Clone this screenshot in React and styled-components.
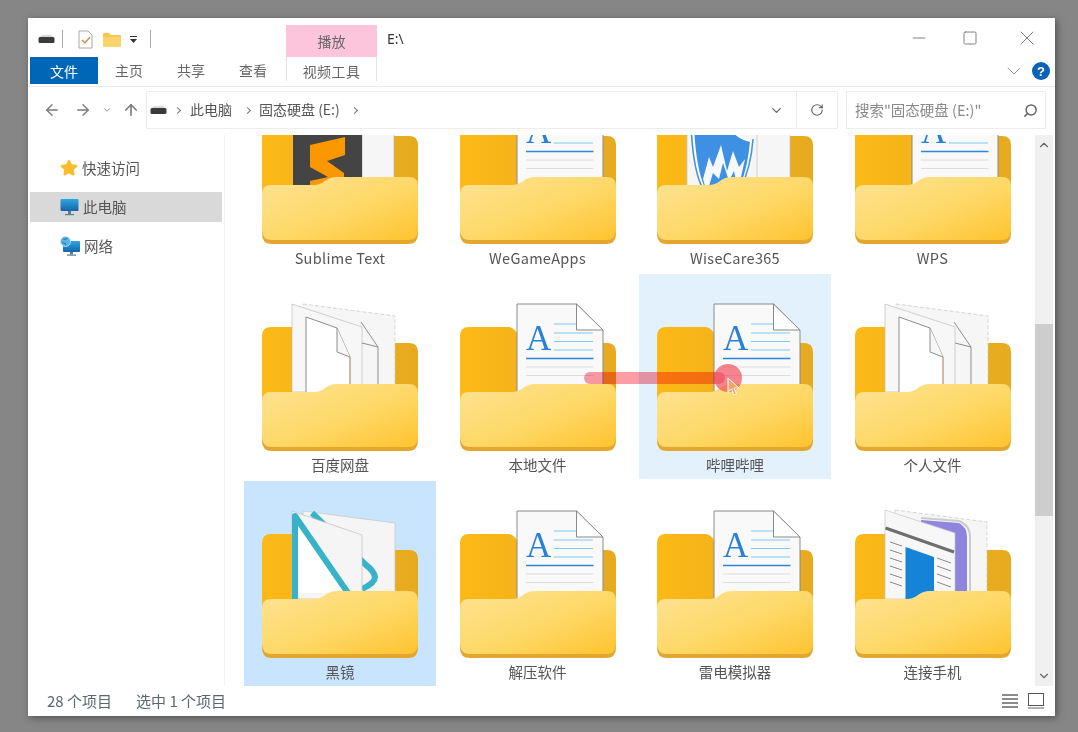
import React from "react";
import styled, { createGlobalStyle } from "styled-components";
import { ArrowLeft, ArrowRight, ArrowUp, ChevronDown, ChevronUp, RotateCw, Search, Minus, Square, X, Star } from "lucide-react";

const Global = createGlobalStyle`
  html, body { margin: 0; padding: 0; background: #868686; }
  * { box-sizing: border-box; }
  body { font-family: "Noto Sans CJK SC", "Noto Sans", sans-serif; color: #555; }
`;

const Page = styled.div`
  width: 1078px; height: 732px; padding: 18px 23px 16px 28px; background: #868686; overflow: hidden;
`;
const Window = styled.div`
  position: relative; width: 1027px; height: 698px; background: #fff;
  display: flex; flex-direction: column; overflow: hidden;
  box-shadow: 2px 2px 7px rgba(40,40,40,.55);
`;
const TitleBar = styled.div`display: flex; height: 39px; flex: none;`;
const QuickTools = styled.div`
  width: 258px; display: flex; align-items: center; padding: 3px 0 0 10px;
`;
const ToolSep = styled.span`
  width: 1px; height: 18px; background: #a8a8a8; margin: ${p => p.$m};
`;
const ToolGap = styled.span`width: ${p => p.$w}px; flex: none;`;
const ContextTab = styled.div`
  width: 91px; margin-top: 7px; background: #fcc5dc; color: #666; font-size: 14px;
  display: flex; align-items: center; justify-content: center; line-height: 1;
`;
const PathTitle = styled.div`
  flex: 1; padding: 12px 0 0 10px; font-size: 14px; line-height: 18px; color: #333; font-family: "Noto Sans", sans-serif;
`;
const WinControls = styled.div`display: flex; color: #808080; padding: 8px 16px 0 0; height: 39px;`;
const WinButton = styled.span`
  width: 24px; height: 24px; display: flex; align-items: center; justify-content: center; margin-right: ${p => p.$mr || 0}px;
`;
const TabRow = styled.div`
  display: flex; align-items: flex-start; height: 30px; flex: none; border-bottom: 1px solid #e9e9e9; padding-left: 2px;
`;
const FileTab = styled.div`
  width: 68px; height: 27px; background: #0067b8; color: #fff; font-size: 14px;
  display: flex; align-items: center; justify-content: center;
`;
const Tab = styled.div`
  width: 62px; height: 27px; font-size: 14px; color: #666; display: flex; align-items: center; justify-content: center; padding-bottom: 1px;
`;
const TabsGap = styled.div`width: 2px;`;
const VideoTab = styled.div`
  width: 91px; height: 24px; font-size: 14px; color: #666; letter-spacing: .4px;
  border-left: 1px solid #e4e4e4; border-right: 1px solid #e4e4e4;
  display: flex; align-items: center; justify-content: center; padding-top: 3px;
`;
const TabEnd = styled.div`
  margin-left: auto; height: 28px; display: flex; align-items: center; gap: 6px; padding: 0 5px 0 0; color: #999;
`;
const Help = styled.div`
  width: 18px; height: 18px; border-radius: 50%; background: #0c62b4; color: #fff; font-size: 13px; font-weight: 700;
  display: flex; align-items: center; justify-content: center; font-family: "Liberation Sans", sans-serif;
`;
const AddressRow = styled.div`
  display: flex; align-items: flex-start; height: 48px; flex: none; padding-top: 4px;
`;
const NavButtons = styled.div`
  width: 118px; height: 38px; display: flex; align-items: center; color: #7a7a7a; padding-left: 15px;
`;
const NavSpace = styled.span`display: flex; width: ${p => p.$w}px; justify-content: flex-start;`;
const AddressBox = styled.div`
  width: 692px; height: 38px; border: 1px solid #ececec; display: flex; align-items: center; font-size: 14px; color: #555;
`;
const Crumbs = styled.div`flex: 1; display: flex; align-items: center; padding-left: 3px;`;
const Crumb = styled.span`margin-right: ${p => p.$mr || 0}px; padding-bottom: 2px; white-space: nowrap;`;
const CrumbArrow = styled.span`
  width: 5px; height: 5px; border-top: 1.5px solid #777; border-right: 1.5px solid #777; transform: rotate(45deg);
  margin: ${p => p.$m};
`;
const DropBtn = styled.div`width: 40px; display: flex; justify-content: center; color: #666;`;
const RefreshBtn = styled.div`
  width: 41px; height: 36px; border-left: 1px solid #ececec; display: flex; align-items: center; justify-content: center; color: #666;
`;
const SearchBox = styled.div`
  width: 200px; height: 38px; margin-left: 8px; border: 1px solid #ececec; display: flex; align-items: center;
  justify-content: space-between; padding: 0 7px 0 8px; font-size: 14.5px; color: #8a8a8a; white-space: nowrap;
`;
const SearchText = styled.span`padding-bottom: 2px;`;
const FlippedSearch = styled(Search)`transform: scaleX(-1); color: #666;`;
const Main = styled.div`flex: 1; display: flex; min-height: 0;`;
const Sidebar = styled.div`
  width: 196px; flex: none; padding: 18px 0 0 2px; display: flex; flex-direction: column; gap: 9px;
`;
const NavRow = styled.div`
  width: 192px; height: 30px; display: flex; align-items: center; gap: 4px; padding-left: 30px; font-size: 14.5px; color: #555;
  background: ${p => (p.$active ? "#d9d9d9" : "transparent")};
`;
const NavText = styled.span`padding-bottom: 2px;`;
const Pane = styled.div`
  flex: 1; border-left: 1px solid #f3f3f3; padding-left: 19px; overflow: hidden; display: flex; flex-direction: column; justify-content: flex-end;
`;
const Grid = styled.div`
  display: grid; grid-template-columns: repeat(4, 192px); column-gap: 5.5px; row-gap: 2px; flex: none;
`;
const Cell = styled.div`
  width: 192px; height: 205px; display: flex; flex-direction: column; align-items: center;
  background: ${p => (p.$state === "selected" ? "#c9e5fe" : p.$state === "hover" ? "#e3f1fd" : "transparent")};
`;
const Label = styled.div`
  font-size: 14.5px; line-height: 22px; color: #555; white-space: nowrap; letter-spacing: ${p => (p.$latin ? ".3px" : "0")};
`;
const FolderSvg = styled.svg`display: block; flex: none;`;
const Scrollbar = styled.div`
  width: 18px; flex: none; margin-right: 2px; background: #f0f0f0; display: flex; flex-direction: column; align-items: center; color: #666;
`;
const ScrollBtn = styled.div`height: 20px; flex: none; display: flex; align-items: center; justify-content: center;`;
const Track = styled.div`flex: 1; width: 100%; padding-top: 169px;`;
const Thumb = styled.div`width: 100%; height: 192px; background: #cdcdcd;`;
const Status = styled.div`
  height: 30px; flex: none; display: flex; align-items: center; padding: 0 11px 0 19px; font-size: 15px; color: #5a6770;
`;
const StatusItem = styled.span`margin-right: ${p => p.$mr}px; padding-bottom: 2px; white-space: nowrap;`;
const ViewIcons = styled.div`margin-left: auto; display: flex; gap: 10px; align-items: center;`;
const Trail = styled.div`
  position: absolute; left: 556px; top: 354px; width: 141px; height: 12px; border-radius: 6px; background: #fb9ca6;
  mix-blend-mode: multiply; pointer-events: none;
`;
const Dot = styled.div`
  position: absolute; left: 686px; top: 346px; width: 28px; height: 28px; border-radius: 50%;
  background: rgba(240, 62, 78, .62); pointer-events: none;
`;
const Cursor = styled.svg`position: absolute; left: 699px; top: 359px;`;

const Defs = () => (
  <svg width="0" height="0" style={{ position: "absolute" }}>
    <defs>
      <linearGradient id="back" x1="0" x2="1" y1="0" y2="0">
        <stop offset="0" stopColor="#fdb916" /><stop offset="1" stopColor="#e6aa20" />
      </linearGradient>
      <linearGradient id="front" x1="0" x2="1" y1="0" y2="1">
        <stop offset="0" stopColor="#fde394" /><stop offset=".55" stopColor="#fed866" /><stop offset="1" stopColor="#fec32f" />
      </linearGradient>
      <linearGradient id="pc" x1="0" x2="0" y1="0" y2="1">
        <stop offset="0" stopColor="#2ea6e0" /><stop offset="1" stopColor="#1565a8" />
      </linearGradient>
    </defs>
  </svg>
);

const Sheets = () => (
  <g>
    <path d="M59 30 L151 42 V118 H59 Z" fill="#f6f6f6" stroke="#c4c4c4" strokeWidth=".7" strokeDasharray="4 2" />
    <path d="M48 30 L118 53 V118 H48 Z" fill="#f7f7f7" stroke="#bdbdbd" strokeWidth=".7" />
  </g>
);

const DocIcon = () => (
  <g>
    <path d="M75 30 H134.5 L161 56 V118 H75 Z" fill="#f9f9f9" stroke="#8a8a8a" strokeWidth="1" />
    <path d="M134.5 30 V56 H161 Z" fill="#fff" stroke="#8a8a8a" strokeWidth="1" />
    <text x="84" y="76" fontFamily="Liberation Serif, serif" fontSize="35" fill="#2a80d4">A</text>
    <g stroke="#7ccbee" strokeWidth="1.2">
      <path d="M112 50 H134 M112 59 H151 M112 67.5 H151 M112 76 H151" />
    </g>
    <path d="M84 84.5 H151.5" stroke="#2f86d6" strokeWidth="1.3" />
    <path d="M84 93 H151.5 M84 101.5 H151.5" stroke="#dddddd" strokeWidth="1.2" />
  </g>
);

const PagesIcon = () => (
  <g>
    <Sheets />
    <path d="M117 48 L134 73 V112 M118 69 L134 73" fill="none" stroke="#8d8d8d" strokeWidth="1" />
    <path d="M62 118 V43 L93 54 L106 83 V118" fill="#fff" stroke="#8d8d8d" strokeWidth="1" />
    <path d="M93 54 V78 L106 83" fill="#f7f7f7" stroke="#8d8d8d" strokeWidth="1" />
    <path d="M106 83 V112" stroke="#e0b080" strokeWidth="1" />
  </g>
);

const SublimeIcon = () => (
  <g>
    <rect x="118" y="30" width="32" height="90" fill="#f6f6f6" stroke="#b4b4b4" strokeWidth=".7" />
    <rect x="49" y="30" width="69" height="90" fill="#444444" />
    <path d="M66 78 L101 70 V88 L83 94 L100 106 V116 L66 120 V114 L84 110 L66 100 Z" fill="#fb9800" />
  </g>
);

const WiseIcon = () => (
  <g>
    <rect x="48" y="30" width="103" height="90" fill="#f6f6f6" stroke="#c6c6c6" strokeWidth=".7" />
    <path d="M118 30 V120" stroke="#c8c8c8" strokeWidth=".8" />
    <path d="M54 60 Q56 100 64 119 H102 Q110 100 112 74 Q100 72 92 62 Q76 62 54 60 Z" fill="#3e90e2" stroke="#fff" strokeWidth="2" />
    <path d="M52 58 Q54 102 63 120 M114 72 Q112 100 102 120" fill="none" stroke="#3e90e2" strokeWidth="1.5" />
    <path d="M64 112 L70 90 L74 100 L82 78 L88 104 L94 84 L100 100 L106 92 L100 119 H66 Z" fill="#fff" opacity=".95" />
    <path d="M70 119 L74 106 L80 112 L84 96 L90 114 L95 104 L98 119 Z" fill="#3e90e2" />
  </g>
);

const MirrorIcon = () => (
  <g>
    <path d="M59 30 L151 42 V118 H59 Z" fill="#f5f5f5" stroke="#c4c4c4" strokeWidth=".7" />
    <path d="M68 32 L122 84 Q130 90 131 96 Q131 102 118 108" fill="none" stroke="#37b2c8" strokeWidth="6" />
    <path d="M48 30 L118 54 V118 H48 Z" fill="#f5f5f5" stroke="#c0c0c0" strokeWidth=".7" />
    <path d="M51 120 V35 L104 112 H51 Z" fill="#fff" />
    <path d="M51 120 V35 L104 112" fill="none" stroke="#37b2c8" strokeWidth="6" strokeLinejoin="round" />
  </g>
);

const PhoneIcon = () => (
  <g>
    <path d="M58 29 L150 41 V118 H58 Z" fill="#f6f6f6" stroke="#c4c4c4" strokeWidth=".7" strokeDasharray="4 2" />
    <path d="M84 39 L122 42 Q130 46 130 56 V110 H84 Z" fill="#8f85df" />
    <path d="M84 37 L122 40 Q133 44 133 56 V110" fill="none" stroke="#999" strokeWidth="2" opacity=".45" />
    <path d="M48 29 L118 52 V118 H48 Z" fill="#f7f7f7" stroke="#c4c4c4" strokeWidth=".7" />
    <path d="M48.5 47 L117 71" stroke="#6e6e6e" strokeWidth="3" />
    <path d="M68.5 66 L97 76 V118 H68.5 Z" fill="#1584d8" />
    <path d="M53 61 L65 65 M53 69 L65 73 M53 77 L65 81 M53 85 L65 89 M53 93 L65 97 M53 101 L65 105 M100 77 L114 82 M100 85 L114 90 M100 93 L114 98 M100 101 L114 106"
      stroke="#8a8a8a" strokeWidth="1" />
  </g>
);

const contents = { doc: DocIcon, pages: PagesIcon, sublime: SublimeIcon, wise: WiseIcon, mirror: MirrorIcon, phone: PhoneIcon };

const Folder = ({ kind }) => {
  const Inner = contents[kind];
  return (
    <FolderSvg width="192" height="180" viewBox="0 0 192 180">
      <path d="M18 62 Q18 53 27 53 H66 Q74 53 80 69 H165 Q174 69 174 78 V130 H18 Z" fill="url(#back)" />
      <Inner />
      <path d="M18 130 H174 V167 Q174 177 164 177 H28 Q18 177 18 167 Z" fill="#e3a62e" />
      <path d="M18 127 Q18 118 27 118 H70 Q76 118 81 114 Q86 110 93 110 H165 Q174 110 174 119 V163 Q174 173 164 173 H28 Q18 173 18 163 Z" fill="url(#front)" />
    </FolderSvg>
  );
};

const items = [
  ["Sublime Text", "sublime"], ["WeGameApps", "doc"], ["WiseCare365", "wise"], ["WPS", "doc"],
  ["百度网盘", "pages"], ["本地文件", "doc"], ["哔哩哔哩", "doc", "hover"], ["个人文件", "pages"],
  ["黑镜", "mirror", "selected"], ["解压软件", "doc"], ["雷电模拟器", "doc"], ["连接手机", "phone"],
];

const Drive = ({ w = 17 }) => (
  <svg width={w} height="10" viewBox="0 0 17 10">
    <path d="M2 3 Q3 1 5 1 H12 Q14 1 15 3 Z" fill="#d8d8d8" />
    <rect x="0.5" y="3" width="16" height="6" rx="1.5" fill="#3a3a3a" />
  </svg>
);
const CheckDoc = () => (
  <svg width="15" height="19" viewBox="0 0 15 19">
    <path d="M1 1 H10 L14 5 V18 H1 Z" fill="#fff" stroke="#a8a8a8" />
    <path d="M4 10 L7 13 L12 7" fill="none" stroke="#d98a3a" strokeWidth="1.4" />
  </svg>
);
const YellowFolder = () => (
  <svg width="18" height="15" viewBox="0 0 18 15">
    <path d="M0 2 Q0 1 1 1 H6 L8 3 H17 Q18 3 18 4 V14 Q18 15 17 15 H1 Q0 15 0 14 Z" fill="#fcc64a" />
    <path d="M0 5 H18 V14 Q18 15 17 15 H1 Q0 15 0 14 Z" fill="#fdd36f" />
  </svg>
);
const Caret = () => (
  <svg width="9" height="7" viewBox="0 0 9 7">
    <rect x="1" y="0" width="7" height="1" fill="#333" />
    <path d="M1 3 H8 L4.5 7 Z" fill="#333" />
  </svg>
);
const Pc = () => (
  <svg width="19" height="18" viewBox="0 0 19 18">
    <rect x="0.5" y="1" width="18" height="12" rx="1" fill="url(#pc)" />
    <rect x="8" y="13" width="3" height="3" fill="#5b7d94" />
    <rect x="5" y="16" width="9" height="1.2" fill="#5b7d94" />
  </svg>
);
const Net = () => (
  <svg width="20" height="20" viewBox="0 0 20 20">
    <rect x="3" y="5" width="17" height="11" rx="1" fill="url(#pc)" />
    <rect x="10" y="16" width="3" height="2.5" fill="#5b7d94" />
    <rect x="7" y="18.5" width="9" height="1.2" fill="#5b7d94" />
    <circle cx="5.5" cy="5.5" r="5" fill="#57b2e4" stroke="#cfeafa" strokeWidth=".8" />
    <path d="M3 3 Q6 4 7 2 M2 7 Q5 6 6 9" stroke="#2b7db8" strokeWidth="1.2" fill="none" />
  </svg>
);
const DetailsIcon = () => (
  <svg width="16" height="15" viewBox="0 0 16 15">
    <path d="M0 1 H16 M0 5 H16 M0 9 H16 M0 13 H16" stroke="#666" strokeWidth="1.3" />
  </svg>
);
const LargeIcon = () => (
  <svg width="16" height="16" viewBox="0 0 16 16">
    <rect x=".5" y=".5" width="15" height="12" fill="none" stroke="#555" />
    <path d="M0 15 H16" stroke="#666" />
  </svg>
);

export default function App() {
  return (
    <Page>
      <Global />
      <Defs />
      <Window>
        <TitleBar>
          <QuickTools>
            <Drive />
            <ToolSep $m="0 15px 0 7px" />
            <CheckDoc />
            <ToolGap $w={10} />
            <YellowFolder />
            <ToolGap $w={8} />
            <Caret />
            <ToolSep $m="0 0 0 12px" />
          </QuickTools>
          <ContextTab>播放</ContextTab>
          <PathTitle>E:\</PathTitle>
          <WinControls>
            <WinButton $mr={27.5}><Minus size={20} strokeWidth={1} absoluteStrokeWidth /></WinButton>
            <WinButton $mr={33}><Square size={16} strokeWidth={1} absoluteStrokeWidth /></WinButton>
            <WinButton><X size={24} strokeWidth={1} absoluteStrokeWidth /></WinButton>
          </WinControls>
        </TitleBar>
        <TabRow>
          <FileTab>文件</FileTab>
          <Tab>主页</Tab>
          <Tab>共享</Tab>
          <Tab>查看</Tab>
          <TabsGap />
          <VideoTab>视频工具</VideoTab>
          <TabEnd>
            <ChevronDown size={24} strokeWidth={1} absoluteStrokeWidth />
            <Help>?</Help>
          </TabEnd>
        </TabRow>
        <AddressRow>
          <NavButtons>
            <NavSpace $w={31}><ArrowLeft size={18} strokeWidth={1.8} /></NavSpace>
            <NavSpace $w={28}><ArrowRight size={18} strokeWidth={1.8} /></NavSpace>
            <NavSpace $w={20}><ChevronDown size={10} strokeWidth={2} /></NavSpace>
            <NavSpace $w={20}><ArrowUp size={18} strokeWidth={2.2} /></NavSpace>
          </NavButtons>
          <AddressBox>
            <Crumbs>
              <Drive />
              <CrumbArrow $m="0 10px 0 8px" />
              <Crumb $mr={5}>此电脑</Crumb>
              <CrumbArrow $m="0 9px 0 8px" />
              <Crumb>固态硬盘 (E:)</Crumb>
              <CrumbArrow $m="0 0 0 12px" />
            </Crumbs>
            <DropBtn><ChevronDown size={15} strokeWidth={2} /></DropBtn>
            <RefreshBtn><RotateCw size={14} strokeWidth={2} /></RefreshBtn>
          </AddressBox>
          <SearchBox>
            <SearchText>搜索"固态硬盘 (E:)"</SearchText>
            <FlippedSearch size={15} strokeWidth={2.4} />
          </SearchBox>
        </AddressRow>
        <Main>
          <Sidebar>
            <NavRow><Star size={18} fill="#fdbc2c" stroke="#fdbc2c" /><NavText>快速访问</NavText></NavRow>
            <NavRow $active><Pc /><NavText>此电脑</NavText></NavRow>
            <NavRow><Net /><NavText>网络</NavText></NavRow>
          </Sidebar>
          <Pane>
            <Grid>
              {items.map(([name, kind, state]) => (
                <Cell key={name} $state={state}>
                  <Folder kind={kind} />
                  <Label $latin={/^[A-Za-z]/.test(name)}>{name}</Label>
                </Cell>
              ))}
            </Grid>
          </Pane>
          <Scrollbar>
            <ScrollBtn><ChevronUp size={14} strokeWidth={2} /></ScrollBtn>
            <Track><Thumb /></Track>
            <ScrollBtn><ChevronDown size={14} strokeWidth={2} /></ScrollBtn>
          </Scrollbar>
        </Main>
        <Status>
          <StatusItem $mr={24}>28 个项目</StatusItem>
          <StatusItem $mr={0}>选中 1 个项目</StatusItem>
          <ViewIcons><DetailsIcon /><LargeIcon /></ViewIcons>
        </Status>
        <Trail />
        <Dot />
        <Cursor width="14" height="20" viewBox="0 0 14 20">
          <path d="M1 1 V15 L4.5 12 L7 18 L9.5 17 L7 11 H12 Z" fill="#f4a46a" stroke="#fff" strokeWidth="1" />
        </Cursor>
      </Window>
    </Page>
  );
}
